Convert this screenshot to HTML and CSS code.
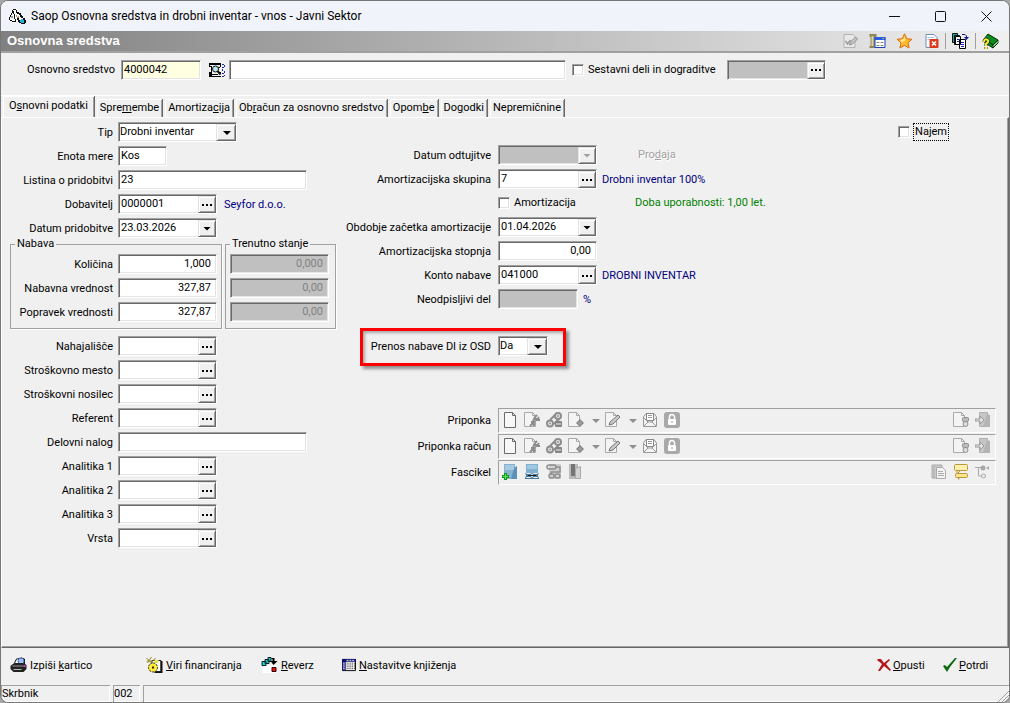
FILE: index.html
```html
<!DOCTYPE html>
<html lang="sl">
<head>
  <meta charset="UTF-8" />
  <title>Saop Osnovna sredstva in drobni inventar</title>
  <meta name="viewport" content="width=device-width, initial-scale=1" />
  <link rel="stylesheet" href="styles.css">
</head>
<body>
  <!-- Icon set -->
  <svg class="icon-set" aria-hidden="true">
    <symbol id="i-app" viewBox="0 0 17 16">
      <path d="M3 1h5v4h3v3l3 3v4h-4l-2-3-1 2H3l-3-4 2-3z" fill="#fff"/>
      <path d="M4 1h3v1H4zM3 2h1v3H3zM7 2h1v3H7zM2 5h1v2H2zM1 7h1v2H1zM0 9h1v3H0zM1 12h2v1H1zM3 13h4v1H3zM4 3h1v3H4zM5 6h1v5H5zM6 11h1v2H6zM8 4h2v2H8zM10 5h2v2h-2zM11 7h2v2h-2zM12 8h2v2h-2zM14 10h2v2h-2zM15 12h2v3h-2zM12 15h4v1h-4zM8 10h2v2H8zM9 12h2v2H9zM10 13h2v2h-2z" fill="#111"/>
      <path d="M2 8h2v2H2zM7 7h1v2H7zM9 8h1v2H9z" fill="#999"/>
      <path d="M8 9h2v1H8z" fill="#b8863b"/>
      <path d="M12 11h2v1h1v3h-3v-1h-1v-2h1z" fill="#27b4d4"/>
    </symbol>
    <symbol id="i-note" viewBox="0 0 16 16">
      <path d="M1.500 1.500h9l2 2v11h-11z" fill="#e9e9e9" stroke="#b3b3b3"/>
      <path d="M3 8l2 3 3-4" stroke="#999" stroke-width="1.500" fill="none"/>
      <path d="M7 12l1-3 5-5 2 2-5 5z" fill="#c9c9c9" stroke="#8f8f8f"/>
    </symbol>
    <symbol id="i-column" viewBox="0 0 16 16">
      <path d="M0 1h7v3H6v9h1v2H0v-2h1V4H0z" fill="#8f8457"/><path d="M2 3h2v10H2z" fill="#d6cfae"/>
      <path d="M5.500 4.500h10v10h-10z" fill="#fff" stroke="#1742c9"/><path d="M5 4h11v3H5z" fill="#2a5be0"/>
      <path d="M7 9h3v1H7zM11 9h3v1h-3zM7 12h3v1H7zM11 12h3v1h-3z" fill="#888"/><path d="M13 5h1v1h-1z" fill="#ff8"/>
    </symbol>
    <symbol id="i-star" viewBox="0 0 16 16">
      <path d="M8 .8l2.200 4.900 5.200.6-3.900 3.500 1.100 5.200L8 12.400 3.400 15l1.100-5.200L.6 6.300l5.200-.6z" fill="#fdbb2d" stroke="#dd6b10"/>
      <path d="M8 3l1 4-4 3-1-3 3-1z" fill="#ffe98a"/>
    </symbol>
    <symbol id="i-docx" viewBox="0 0 16 16">
      <path d="M2.500 1.500h8l3 3v10h-11z" fill="#fdfdff" stroke="#6f8fb8"/><path d="M4 4h6v1H4zM4 6h7v1H4z" fill="#a9c0de"/>
      <rect x="6" y="6" width="9" height="9" rx="1" fill="#dc3a1c"/><path d="M8.500 8.500l4 4m0-4l-4 4" stroke="#fff" stroke-width="1.600"/>
    </symbol>
    <symbol id="i-copy" viewBox="0 0 17 16">
      <path d="M.5.500h5v9h-5zM2.500 2.500h5v9h-5z" fill="#19a6a6" stroke="#111"/>
      <path d="M3.500 3.500h5v8h-5zM7.500 6.500h6v9h-6z" fill="#fff" stroke="#000"/>
      <path d="M5 6h2v1H5zM5 8h2v1H5zM9 9h3v1H9zM9 11h3v1H9zM9 13h3v1H9z" fill="#1a1ad0"/>
      <path d="M10 1.500h3l1.500 1.500v2" fill="none" stroke="#111a8c"/><path d="M12 4h5l-2.500 3z" fill="#111a8c"/>
    </symbol>
    <symbol id="i-book" viewBox="0 0 17 16">
      <path d="M6 1l10 6-5 5L2 6z" fill="#0a8a1a" stroke="#04340a"/><path d="M2 6l9 6v3L3 10zM11 12l5-5v3l-5 5z" fill="#0a8a1a" stroke="#04340a"/>
      <path d="M11 13.500l5-5" stroke="#fff"/>
      <path d="M2 9c0-4 5-3 4 0L4 11v2M4 14v2" fill="none" stroke="#222" stroke-width="3"/>
      <path d="M2 9c0-4 5-3 4 0L4 11v2M4 14v2" fill="none" stroke="#ffee20" stroke-width="2"/>
    </symbol>
    <symbol id="i-find" viewBox="0 0 17 14">
      <path d="M0 0h12v4h-1V2H1v2H0zM1 3h2v1H1zM2 4h1v5H2zM0 9h3v4h9v1H0zM9 9h3v1H9zM9 4h2v1H9z" fill="#000"/>
      <path d="M3 11h6v1H3z" fill="#000"/>
      <circle cx="6.500" cy="6" r="3" fill="#bfe6f5" stroke="#111"/><path d="M8.500 8l3 3.500" stroke="#111" stroke-width="2"/>
      <path d="M13 1h2v1h1v2h-1v1h-2V4h2V2h-2zM13 6h1v2h2v2h-1v1h-2v-1h2V8h-2zM15 12h1v1h-1v1h-2v-1h2z" fill="#1f2aa8"/>
    </symbol>
    <symbol id="i-doc" viewBox="0 0 16 16">
      <path d="M2.500.500h8l3 3v12h-11z" fill="#f7f7f7" stroke="#6b6b6b"/><path d="M10.500.500v3h3" fill="none" stroke="#6b6b6b"/>
    </symbol>
    <symbol id="i-softdoc" viewBox="0 0 16 16">
      <path d="M.5.500h8l3 3v11H.5z" fill="#f4f4f4" stroke="#aaa"/><path d="M8.500.500v3h3" fill="none" stroke="#aaa"/>
    </symbol>
    <symbol id="i-wrench" viewBox="0 0 16 16">
      <use href="#i-softdoc" width="16" height="16"/><path d="M6 14l5-5M9 9l2-4 2-2M11 7h4M7 10h3v4M15 5l-2 3h3" stroke="#8c8c8c" stroke-width="2" fill="none"/>
    </symbol>
    <symbol id="i-links" viewBox="0 0 16 16">
      <g fill="none" stroke="#8c8c8c" stroke-width="2"><circle cx="12" cy="4" r="3"/><circle cx="4" cy="11.500" r="3"/><path d="M9 3L4 8M13 7l-5 5"/></g>
      <circle cx="12" cy="4" r="1" fill="#8c8c8c"/><circle cx="4" cy="11.500" r="1" fill="#8c8c8c"/>
      <rect x="9" y="9" width="7" height="6" rx="1" fill="#858585"/><path d="M10 12h5" stroke="#eee"/>
    </symbol>
    <symbol id="i-diamond" viewBox="0 0 16 16">
      <use href="#i-softdoc" width="16" height="16"/><path d="M12 7l4 4-4 4-4-4z" fill="#858585"/><path d="M12 9v4M10 11h4" stroke="#aaa"/>
    </symbol>
    <symbol id="i-pen" viewBox="0 0 16 16">
      <use href="#i-softdoc" width="16" height="16"/><path d="M4 13l1-3 8-7 2 2-7 7z" fill="#c8c8c8" stroke="#777"/>
    </symbol>
    <symbol id="i-down" viewBox="0 0 8 16"><path d="M0 7h8L4 11z" fill="#8f8f8f"/></symbol>
    <symbol id="i-mail" viewBox="0 0 16 16">
      <path d="M1.500 5L4 1.500h8L14.500 5v9.500h-13z" fill="#f3f3f3" stroke="#999"/><path d="M4.500 1.500h7v7h-7z" fill="#fff" stroke="#888"/>
      <path d="M6 3.500h4M6 5.500h4M2 14l4-4h4l4 4M2 6l4 4M14 6l-4 4" fill="none" stroke="#999"/>
    </symbol>
    <symbol id="i-lock" viewBox="0 0 16 16">
      <rect y="0" width="16" height="16" rx="3" fill="#a9a9a9"/><rect x="4" y="7" width="8" height="6" rx="1" fill="#fff"/>
      <path d="M5.500 7V5a2.500 2.500 0 0 1 5 0v2" fill="none" stroke="#fff" stroke-width="1.500"/><path d="M8 9v2" stroke="#a0a0a0"/>
    </symbol>
    <symbol id="i-docscan" viewBox="0 0 16 16">
      <use href="#i-softdoc" width="16" height="16"/><rect x="9.500" y="5.500" width="6" height="4" rx="1" fill="#bbb" stroke="#909090"/><circle cx="12.500" cy="12" r="2.500" fill="#ddd" stroke="#909090"/>
    </symbol>
    <symbol id="i-export" viewBox="0 0 16 16">
      <path d="M4.500.500h8v14h-8z" fill="#c6c6c6" stroke="#b0b0b0"/><path d="M12 2l3 1v12H8z" fill="#b4b4b4"/>
      <path d="M0 7h5V4l4 4-4 4V9H0z" fill="#e4e4e4" stroke="#999"/>
    </symbol>
    <symbol id="i-fadd" viewBox="0 0 16 16">
      <path d="M2 0h11v15H2z" fill="#85b3d1"/><path d="M12 4l3-2v13H9z" fill="#5c90b6"/><path d="M3 1h9v5H3z" fill="#a4cbe2"/>
      <path d="M3.500 9v7M0 12.500h7" stroke="#0f9a1c" stroke-width="3"/><path d="M3.500 10v5M1 12.500h5" stroke="#5fe05f"/>
    </symbol>
    <symbol id="i-flink" viewBox="0 0 16 16">
      <path d="M2 0h12v10H2z" fill="#7fb0d0"/><path d="M3 1h10v4H3z" fill="#a0c8e0"/><path d="M1 9h14v6H1z" fill="#48789b"/>
      <rect x="1.500" y="9.500" width="6" height="4" rx="1" fill="none" stroke="#eee"/><rect x="8.500" y="9.500" width="6" height="4" rx="1" fill="none" stroke="#eee"/><path d="M4 11.500h8" stroke="#222"/>
    </symbol>
    <symbol id="i-fchain" viewBox="0 0 16 16">
      <path d="M3 0h12v15H3z" fill="#cfcfcf"/><g fill="none" stroke="#8e8e8e" stroke-width="1.500"><rect x="1" y="1" width="9" height="4" rx="2"/><path d="M10 3h4v5H5v3"/><rect x="3" y="10" width="5" height="4" rx="2"/><rect x="9" y="10" width="5" height="4" rx="2"/></g>
    </symbol>
    <symbol id="i-binder" viewBox="0 0 16 16">
      <path d="M1 0h9v15H1z" fill="#b9b9b9"/><path d="M3 0h4v12H3z" fill="#757575"/><path d="M7.500 4.500l5-2v12h-5z" fill="#d3d3d3" stroke="#aaa"/>
    </symbol>
    <symbol id="i-fdoc" viewBox="0 0 16 16">
      <path d="M1 1h10v13H1z" fill="#cacaca" stroke="#aaa"/><path d="M5.500 3.500h6l3 3v8h-9z" fill="#f4f4f4" stroke="#aaa"/><path d="M7 7.500h5M7 9.500h6M7 11.500h6M3 2v12" stroke="#aaa"/>
    </symbol>
    <symbol id="i-notes" viewBox="0 0 16 16">
      <rect x="1.500" y=".5" width="13" height="6" rx="1" fill="#fdf0ae" stroke="#b9983b"/><path d="M4 7v3l3-3" fill="#fdf0ae" stroke="#b9983b"/>
      <rect x="2.500" y="9.500" width="12" height="4" rx="1" fill="#fbe48c" stroke="#b9983b"/><path d="M5 13v3l3-3" fill="#b9983b"/>
    </symbol>
    <symbol id="i-tree" viewBox="0 0 16 16">
      <path d="M0 3.500h8M3.500 3v9h4" fill="none" stroke="#aaa"/><circle cx="8" cy="4" r="2.500" fill="#a8a8a8"/><circle cx="8.500" cy="12" r="2" fill="#eee" stroke="#aaa"/><path d="M11 4l3-2v4z" fill="#aaa"/>
    </symbol>
    <symbol id="i-print" viewBox="0 0 16 16">
      <path d="M4 6l2-4 5-1 3 1v6H4z" fill="#fff" stroke="#111"/><circle cx="10.500" cy="4" r="3" fill="#9cc3f5" stroke="#4664b8"/>
      <path d="M1 8l3-2h9l3 2v4l-3 3H3l-3-3V9z" fill="#222"/><path d="M2 9h11" stroke="#999"/><path d="M3 12.500h8" stroke="#bbb"/><path d="M13 8h2v2h-2z" fill="#c040c0"/>
    </symbol>
    <symbol id="i-gears" viewBox="0 0 16 16">
      <path d="M5.500 3.500h9v11h-9z" fill="#fff" stroke="#222"/><path d="M14 4h2v12H8v-1h6z" fill="#111"/>
      <path d="M0 1l5 5M5 0L1 6M0 4h6M9 1L6 4" stroke="#908b20"/><path d="M8 3h4v3H8z" fill="#eee04a"/>
      <circle cx="6.500" cy="10.500" r="4.500" fill="#ffec33" stroke="#222" stroke-dasharray="2 1"/><path d="M5.500 9.500h2v2h-2z" fill="#222"/>
    </symbol>
    <symbol id="i-boxes" viewBox="0 0 16 16">
      <path d="M1 10l5-2h9v8H1z" fill="#fff"/><path d="M6.500.500h3v4h-3zM3.500 2.500h4v4h-4zM.5 4.500h4v4h-4z" fill="#25d5d5" stroke="#022"/>
      <path d="M10 1h3v3h3l-4 4-3-4h2V2h-1z" fill="#000"/><path d="M10.500 10.500h4v4h-4z" fill="#e81010" stroke="#300"/>
    </symbol>
    <symbol id="i-grid" viewBox="0 0 15 13">
      <path d="M.5.500h14v12H.5z" fill="#fff" stroke="#000"/><path d="M0 0h15v3H0zM0 0h4v12H0z" fill="#10106e"/>
      <path d="M5 4.500h9M5 6.500h9M5 8.500h9M5 10.500h9" stroke="#000" stroke-dasharray="1 1"/><path d="M1 4.500h2M1 6.500h2M1 8.500h2M1 10.500h2M5 1.500h9" stroke="#fff" stroke-dasharray="2 1"/>
    </symbol>
    <symbol id="i-cancel" viewBox="0 0 14 14"><path d="M1 1h3l3 4 5-4 1 1-4 4 5 6-1 1-6-5-4 5H1l4-7-5-4z" fill="#b5161c"/></symbol>
    <symbol id="i-ok" viewBox="0 0 14 14"><path d="M0 8l2-1 2 2L12 0h2L7 9l-3 5z" fill="#0b6b0f"/></symbol>
  </svg>

  <div class="window">
    <!-- Window title bar -->
    <header class="titlebar">
      <svg class="icon"><use href="#i-app"/></svg>
      <span class="title">Saop Osnovna sredstva in drobni inventar - vnos - Javni Sektor</span>
      <button class="win-btn" aria-label="Minimize"><svg viewBox="0 0 11 11"><path d="M0 5.500h11"/></svg></button>
      <button class="win-btn" aria-label="Maximize"><svg viewBox="0 0 11 11"><rect x=".5" y=".5" width="10" height="10" rx="1"/></svg></button>
      <button class="win-btn" aria-label="Close"><svg viewBox="0 0 11 11"><path d="M.5.500l10 10m0-10l-10 10"/></svg></button>
    </header>

    <div class="band">
      <h1>Osnovna sredstva</h1>
      <button aria-label="Uredi"><svg class="icon"><use href="#i-note"/></svg></button>
      <button aria-label="Tabela"><svg class="icon"><use href="#i-column"/></svg></button>
      <button aria-label="Priljubljene"><svg class="icon"><use href="#i-star"/></svg></button>
      <button aria-label="Zapri dokument"><svg class="icon"><use href="#i-docx"/></svg></button>
      <button class="sep" aria-label="Kopiraj"><svg class="icon"><use href="#i-copy"/></svg></button>
      <button class="sep" aria-label="Pomoč"><svg class="icon"><use href="#i-book"/></svg></button>
    </div>

    <!-- Record key -->
    <div class="key-row">
      <label class="key-label" for="sredstvo">Osnovno sredstvo</label>
      <input class="field w-code key" id="sredstvo" value="4000042">
      <button class="find" aria-label="Išči"><svg class="icon"><use href="#i-find"/></svg></button>
      <input class="field w-name" aria-label="Naziv">
      <label class="check"><input type="checkbox">Sestavni deli in dograditve</label>
      <span class="combo off parts"><input aria-label="Sestavni deli" disabled><button class="more" aria-label="Izberi"></button></span>
    </div>

    <!-- Tabs -->
    <nav class="tabs">
      <button class="active">O<u>s</u>novni podatki</button>
      <button>Spre<u>m</u>embe</button>
      <button>Amortiza<u>c</u>ija</button>
      <button>Ob<u>r</u>ačun za osnovno sredstvo</button>
      <button>Opom<u>b</u>e</button>
      <button>Do<u>g</u>odki</button>
      <button>Nepremičnine</button>
    </nav>

    <main class="panel">
      <!-- Left column -->
      <div class="col left">
        <div class="row"><label for="tip">Tip</label><span class="combo drop w-type"><select id="tip"><option>Drobni inventar</option></select></span></div>
        <div class="row"><label for="enota">Enota mere</label><input class="field w-unit" id="enota" value="Kos"></div>
        <div class="row"><label for="listina">Listina o pridobitvi</label><input class="field w-long" id="listina" value="23"></div>
        <div class="row"><label for="dobavitelj">Dobavitelj</label><span class="combo"><input id="dobavitelj" value="0000001"><button class="more" aria-label="Izberi"></button></span><span class="note">Seyfor d.o.o.</span></div>
        <div class="row"><label for="datum">Datum pridobitve</label><span class="combo"><input id="datum" value="23.03.2026"><button class="arrow" aria-label="Koledar"></button></span></div>

        <div class="groups">
          <fieldset>
            <legend>Nabava</legend>
            <div class="row"><label for="kolicina">Količina</label><input class="field num" id="kolicina" value="1,000"></div>
            <div class="row"><label for="nabavna">Nabavna vrednost</label><input class="field num" id="nabavna" value="327,87"></div>
            <div class="row"><label for="popravek">Popravek vrednosti</label><input class="field num" id="popravek" value="327,87"></div>
          </fieldset>
          <fieldset class="current">
            <legend>Trenutno stanje</legend>
            <input class="field num" aria-label="Trenutna količina" value="0,000" disabled>
            <input class="field num" aria-label="Trenutna nabavna vrednost" value="0,00" disabled>
            <input class="field num" aria-label="Trenutni popravek" value="0,00" disabled>
          </fieldset>
        </div>

        <div class="row"><label for="nahajalisce">Nahajališče</label><span class="combo"><input id="nahajalisce"><button class="more" aria-label="Izberi"></button></span></div>
        <div class="row"><label for="mesto">Stroškovno mesto</label><span class="combo"><input id="mesto"><button class="more" aria-label="Izberi"></button></span></div>
        <div class="row"><label for="nosilec">Stroškovni nosilec</label><span class="combo"><input id="nosilec"><button class="more" aria-label="Izberi"></button></span></div>
        <div class="row"><label for="referent">Referent</label><span class="combo"><input id="referent"><button class="more" aria-label="Izberi"></button></span></div>
        <div class="row"><label for="nalog">Delovni nalog</label><input class="field w-long" id="nalog"></div>
        <div class="row"><label for="an1">Analitika 1</label><span class="combo"><input id="an1"><button class="more" aria-label="Izberi"></button></span></div>
        <div class="row"><label for="an2">Analitika 2</label><span class="combo"><input id="an2"><button class="more" aria-label="Izberi"></button></span></div>
        <div class="row"><label for="an3">Analitika 3</label><span class="combo"><input id="an3"><button class="more" aria-label="Izberi"></button></span></div>
        <div class="row"><label for="vrsta">Vrsta</label><span class="combo"><input id="vrsta"><button class="more" aria-label="Izberi"></button></span></div>
      </div>

      <!-- Right column -->
      <div class="col right">
        <label class="check rent"><input type="checkbox"><span>Najem</span></label>
        <div class="row"><label for="odtujitev">Datum odtujitve</label><span class="combo off"><input id="odtujitev" disabled><button class="arrow" aria-label="Koledar" disabled></button></span><button class="sell" disabled>Pro<u>d</u>aja</button></div>
        <div class="row"><label for="skupina">Amortizacijska skupina</label><span class="combo"><input id="skupina" value="7"><button class="more" aria-label="Izberi"></button></span><span class="note">Drobni inventar 100%</span></div>
        <div class="row indent"><label class="check amort"><input type="checkbox">Amortizacija</label><span class="life">Doba uporabnosti: 1,00 let.</span></div>
        <div class="row"><label for="obdobje">Obdobje začetka amortizacije</label><span class="combo"><input id="obdobje" value="01.04.2026"><button class="arrow" aria-label="Koledar"></button></span></div>
        <div class="row"><label for="stopnja">Amortizacijska stopnja</label><input class="field num" id="stopnja" value="0,00"></div>
        <div class="row"><label for="konto">Konto nabave</label><span class="combo"><input id="konto" value="041000"><button class="more" aria-label="Izberi"></button></span><span class="note">DROBNI INVENTAR</span></div>
        <div class="row"><label for="del">Neodpisljivi del</label><input class="field w-code" id="del" disabled><span class="note">%</span></div>

        <div class="row marked"><label for="prenos">Prenos nabave DI iz OSD</label><span class="combo drop w-yes"><select id="prenos"><option>Da</option><option>Ne</option></select></span></div>

        <div class="attachments">
          <div class="row">
            <span class="caption">Priponka</span>
            <div class="toolbar">
              <button aria-label="Nov"><svg class="icon"><use href="#i-doc"/></svg></button>
              <button aria-label="Uredi"><svg class="icon"><use href="#i-wrench"/></svg></button>
              <button aria-label="Povezave"><svg class="icon"><use href="#i-links"/></svg></button>
              <button class="split" aria-label="Dodaj"><svg class="icon"><use href="#i-diamond"/></svg><svg class="down"><use href="#i-down"/></svg></button>
              <button class="split" aria-label="Podpiši"><svg class="icon"><use href="#i-pen"/></svg><svg class="down"><use href="#i-down"/></svg></button>
              <button aria-label="Pošlji"><svg class="icon"><use href="#i-mail"/></svg></button>
              <button aria-label="Zakleni"><svg class="icon"><use href="#i-lock"/></svg></button>
              <button class="push" aria-label="Skeniraj"><svg class="icon"><use href="#i-docscan"/></svg></button>
              <button aria-label="Izvozi"><svg class="icon"><use href="#i-export"/></svg></button>
            </div>
          </div>
          <div class="row">
            <span class="caption">Priponka račun</span>
            <div class="toolbar">
              <button aria-label="Nov"><svg class="icon"><use href="#i-doc"/></svg></button>
              <button aria-label="Uredi"><svg class="icon"><use href="#i-wrench"/></svg></button>
              <button aria-label="Povezave"><svg class="icon"><use href="#i-links"/></svg></button>
              <button class="split" aria-label="Dodaj"><svg class="icon"><use href="#i-diamond"/></svg><svg class="down"><use href="#i-down"/></svg></button>
              <button class="split" aria-label="Podpiši"><svg class="icon"><use href="#i-pen"/></svg><svg class="down"><use href="#i-down"/></svg></button>
              <button aria-label="Pošlji"><svg class="icon"><use href="#i-mail"/></svg></button>
              <button aria-label="Zakleni"><svg class="icon"><use href="#i-lock"/></svg></button>
              <button class="push" aria-label="Skeniraj"><svg class="icon"><use href="#i-docscan"/></svg></button>
              <button aria-label="Izvozi"><svg class="icon"><use href="#i-export"/></svg></button>
            </div>
          </div>
          <div class="row">
            <span class="caption">Fascikel</span>
            <div class="toolbar">
              <button aria-label="Nov fascikel"><svg class="icon"><use href="#i-fadd"/></svg></button>
              <button aria-label="Poveži"><svg class="icon"><use href="#i-flink"/></svg></button>
              <button aria-label="Prekini povezavo"><svg class="icon"><use href="#i-fchain"/></svg></button>
              <button aria-label="Odpri"><svg class="icon"><use href="#i-binder"/></svg></button>
              <button class="push" aria-label="Dokumenti"><svg class="icon"><use href="#i-fdoc"/></svg></button>
              <button aria-label="Opombe"><svg class="icon"><use href="#i-notes"/></svg></button>
              <button aria-label="Drevo"><svg class="icon"><use href="#i-tree"/></svg></button>
            </div>
          </div>
        </div>
      </div>
    </main>

    <!-- Actions -->
    <div class="actions">
      <button><svg class="icon"><use href="#i-print"/></svg><span>Izpiši <u>k</u>artico</span></button>
      <button><svg class="icon"><use href="#i-gears"/></svg><span><u>V</u>iri financiranja</span></button>
      <button><svg class="icon"><use href="#i-boxes"/></svg><span><u>R</u>everz</span></button>
      <button><svg class="icon small"><use href="#i-grid"/></svg><span><u>N</u>astavitve knjiženja</span></button>
      <button class="end"><svg class="icon small"><use href="#i-cancel"/></svg><span><u>O</u>pusti</span></button>
      <button class="end"><svg class="icon small"><use href="#i-ok"/></svg><span><u>P</u>otrdi</span></button>
    </div>

    <footer class="status">
      <span class="user">Skrbnik</span>
      <span class="code">002</span>
      <span class="rest"><svg class="grip" viewBox="0 0 12 12"><path d="M1 12L12 1M5 12l7-7M9 12l3-3"/></svg></span>
    </footer>
  </div>
</body>
</html>
```
FILE: styles.css
```css
:root {
  --face: #f0f0f0;
  --shadow: #a0a0a0;
  --dark: #696969;
  --light: #e3e3e3;
  --off: #c0c0c0;
  --navy: #000080;
}

* {
  box-sizing: border-box;
}

body {
  margin: 0;
  background: #a6a6a6;
  font: 11px/14px Tahoma, Roboto, sans-serif;
  color: #000;
}

button,
input,
select {
  font: inherit;
  color: inherit;
}

button {
  border: 0;
  padding: 0;
  background: none;
}

.icon-set {
  display: none;
}

.icon {
  flex: none;
  width: 17px;
  height: 16px;
}

.window {
  display: flex;
  flex-direction: column;
  min-height: 100vh;
  border: 1px solid #777;
  border-radius: 8px;
  overflow: hidden;
  background: var(--face);
}

/* Title bar */
.titlebar {
  display: flex;
  align-items: center;
  height: 30px;
  padding-left: 8px;
  background: #f1f3fa;
}

.title {
  flex: 1;
  margin-left: 5px;
  font: 12px/16px "Segoe UI", Roboto, sans-serif;
}

.win-btn {
  display: flex;
  justify-content: center;
  width: 46px;
}

.win-btn svg {
  width: 11px;
  height: 11px;
  fill: none;
  stroke: #111;
}

.band {
  display: flex;
  align-items: center;
  height: 22px;
  padding: 0 4px 0 6px;
  border-bottom: 2px solid var(--shadow);
  background: linear-gradient(90deg, #808080, #f0f0f0);
}

.band h1 {
  flex: 1;
  margin: 0;
  font: bold 13px/18px Arial, "Liberation Sans", sans-serif;
  color: #fff;
}

.band button {
  display: flex;
  justify-content: center;
  width: 27px;
}

.band .sep {
  width: 30px;
  border-left: 1px solid var(--shadow);
}

/* Record key */
.key-row {
  display: flex;
  align-items: center;
  height: 43px;
  padding-bottom: 9px;
  border-bottom: 1px solid #fff;
}

.key-label {
  width: 114px;
  margin-right: 6px;
  text-align: right;
}

.find {
  display: flex;
  justify-content: flex-end;
  width: 28px;
  padding-right: 3px;
}

/* Fields */
.field,
.combo {
  width: 99px;
  height: 20px;
  border: 1px solid;
  border-color: var(--shadow) #fff #fff var(--shadow);
  border-radius: 0;
  background: #fff;
  box-shadow: inset 1px 1px var(--dark), inset -1px -1px var(--light);
}

.field {
  padding: 0 3px 1px 2px;
}

.field.num {
  padding-right: 5px;
  text-align: right;
}

.field:disabled,
.combo.off {
  background: var(--off);
  color: #808080;
}

.key {
  background: #ffffe1;
}

.w-code { width: 80px; }
.w-name { width: 337px; }
.w-unit { width: 49px; }
.w-long { width: 189px; }

.combo {
  display: flex;
  position: relative;
  flex: none;
  padding: 1px 0 0 1px;
}

.combo.w-type { width: 119px; }
.combo.w-yes { width: 50px; }

.combo input,
.combo select {
  flex: 1;
  min-width: 0;
  border: 0;
  padding: 0 0 1px 1px;
  background: none;
  appearance: none;
}

.combo select {
  padding-left: 0;
}

.combo button,
.drop::after {
  flex: none;
  width: 18px;
  border: 1px solid;
  border-color: var(--light) var(--dark) var(--dark) var(--light);
  background: var(--face);
  box-shadow: inset 1px 1px #fff, inset -1px -1px var(--shadow);
}

.drop::after {
  content: "";
  position: absolute;
  top: 1px;
  right: 0;
  bottom: 0;
  pointer-events: none;
}

.combo .more::before {
  content: "";
  display: block;
  width: 10px;
  height: 2px;
  margin: 0 auto;
  background: repeating-linear-gradient(90deg, #000 0 2px, transparent 2px 4px);
}

.combo .arrow::before,
.drop::before {
  content: "";
  display: block;
  width: 8px;
  height: 4px;
  margin: 0 auto;
  background: #000;
  clip-path: polygon(0 0, 100% 0, 50% 100%);
}

.drop::before {
  position: absolute;
  top: 8px;
  right: 5px;
  z-index: 1;
  pointer-events: none;
}

.combo .arrow:disabled::before {
  background: var(--shadow);
}

.check {
  display: flex;
  align-items: center;
  gap: 4px;
}

.check input {
  appearance: none;
  width: 12px;
  height: 12px;
  margin: 0;
  border: 1px solid;
  border-color: var(--shadow) #fff #fff var(--shadow);
  background: #fff;
  box-shadow: inset 1px 1px var(--dark), inset -1px -1px var(--light);
}

.key-row .check {
  width: 155px;
  margin-left: 6px;
  white-space: nowrap;
}

/* Tabs */
.tabs {
  display: flex;
  align-items: flex-end;
  gap: 2px;
  height: 21px;
  padding-left: 2px;
}

.tabs button {
  height: 18px;
  padding: 0 3px;
  border: solid var(--dark);
  border-width: 0 1px 0 0;
  box-shadow: inset 1px 1px #fff, inset -1px 0 var(--shadow);
  white-space: nowrap;
}

.tabs .active {
  height: 21px;
  padding: 0 6px 2px;
}

/* Panel */
.panel {
  display: flex;
  flex: 1;
  border: 1px solid;
  border-color: #fff var(--dark) var(--dark) #fff;
  box-shadow: inset -1px -1px var(--shadow);
  padding: 4px 12px 8px 0;
}

.col {
  display: flex;
  flex-direction: column;
  gap: 4px;
}

.left {
  flex: none;
  width: 338px;
}

.right {
  flex: 1;
}

.row {
  display: flex;
  align-items: center;
  gap: 5px;
  height: 20px;
}

.row > label:first-child,
.caption {
  flex: none;
  width: 111px;
  padding-top: 2px;
  text-align: right;
  white-space: nowrap;
}

.right .row > label:first-child,
.caption {
  width: 151px;
  margin-right: 2px;
}

.note {
  margin-left: 2px;
  padding-top: 2px;
  color: var(--navy);
}

.right .note {
  margin-left: 0;
}

.groups {
  display: flex;
  gap: 3px;
  margin: -4px 0 3px 8px;
}

fieldset {
  display: flex;
  flex-direction: column;
  gap: 4px;
  min-width: 0;
  margin: 0;
  padding: 4px;
  padding-bottom: 6px;
  border: 1px solid var(--shadow);
  box-shadow: 1px 1px #fff;
}

.current {
  padding-right: 6px;
}

legend {
  padding: 0 2px;
  line-height: 12px;
}

fieldset .row > label:first-child {
  width: 98px;
}

.rent {
  align-self: flex-end;
  height: 19px;
  margin-right: 48px;
}

.rent span {
  padding: 1px;
  outline: 1px dotted #000;
}

.sell {
  margin-left: 36px;
}

.sell:disabled {
  color: var(--shadow);
  text-shadow: 1px 1px #fff;
}

.indent {
  padding-left: 158px;
}

.right .row > label.amort {
  width: 98px;
  margin: 0;
  padding: 0;
  text-align: left;
}

.life {
  margin-left: 34px;
  color: #008000;
}

.right .marked {
  align-self: flex-start;
  height: auto;
  margin: 15px 0 0 20px;
  padding: 5px 15px 7px 0;
  border: 3px solid #f00;
  box-shadow: 3px 3px 3px rgba(0, 0, 0, 0.4), inset 2px 2px 3px rgba(0, 0, 0, 0.3);
}

.right .marked > label:first-child {
  width: 128px;
}

/* Attachment toolbars */
.attachments {
  margin-top: 37px;
}

.attachments .row {
  height: 26px;
}

.toolbar {
  display: flex;
  flex: 1;
  align-items: center;
  height: 25px;
  padding-right: 1px;
  border: 1px solid;
  border-color: var(--shadow) #fff #fff var(--shadow);
}

.toolbar button {
  display: flex;
  width: 22px;
  padding-left: 3px;
}

.toolbar .icon {
  width: 16px;
}

.toolbar .split {
  width: 37px;
  gap: 8px;
}

.down {
  width: 8px;
  height: 16px;
}

.toolbar .push {
  margin-left: auto;
}

/* Actions */
.actions {
  display: grid;
  grid-template-columns: 136px 115px 81px 1fr 66px 66px;
  align-items: center;
  height: 37px;
  padding: 0 0 3px 9px;
}

.actions button {
  display: flex;
  align-items: center;
  gap: 3px;
  white-space: nowrap;
}

.actions span {
  padding-top: 2px;
}

.actions .small {
  width: 14px;
  height: 14px;
}

.actions .end {
  gap: 2px;
}

/* Status bar */
.status {
  display: flex;
  gap: 3px;
  height: 17px;
}

.status span {
  border: solid var(--shadow);
  border-width: 1px 0 0 1px;
  box-shadow: inset -1px -1px #fff;
  line-height: 16px;
}

.user { width: 109px; }
.code { width: 27px; }

.rest {
  display: flex;
  flex: 1;
  justify-content: flex-end;
  align-items: flex-end;
}

.grip {
  width: 12px;
  height: 12px;
  fill: none;
  stroke: var(--shadow);
}
```
